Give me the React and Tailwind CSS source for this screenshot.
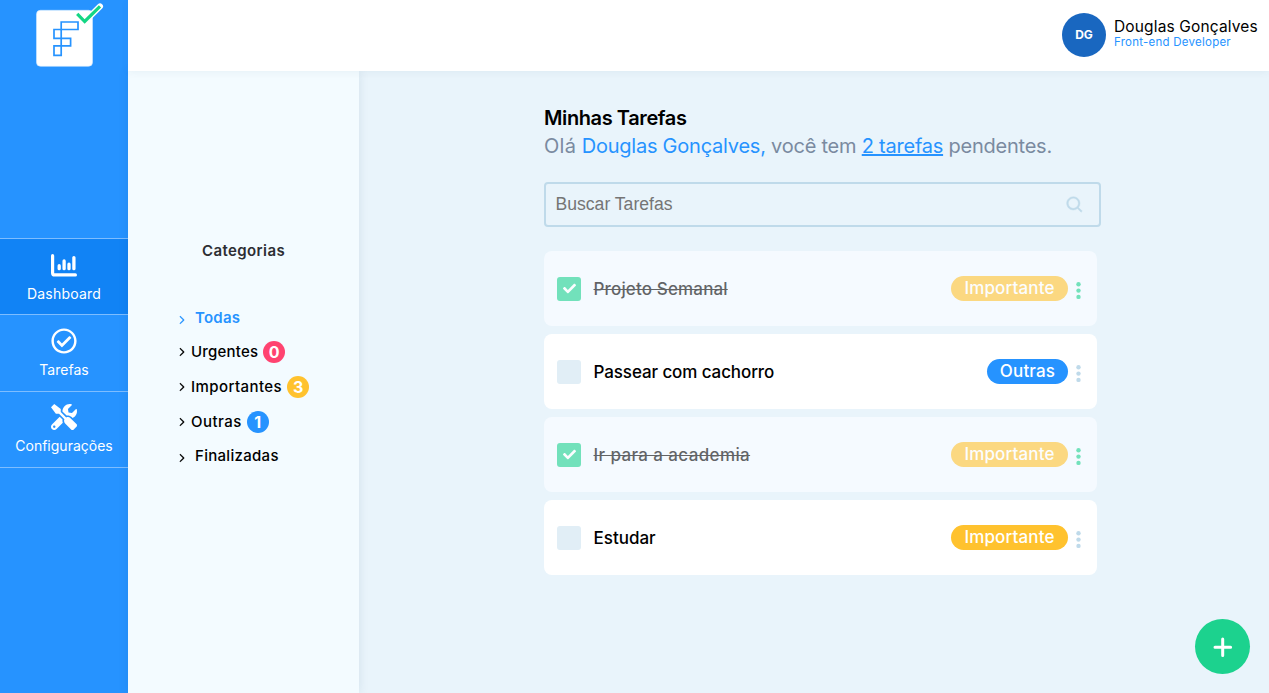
import React from "react";
import { FaRegCheckCircle, FaTools, FaCheck } from "react-icons/fa";
import { IoIosArrowForward } from "react-icons/io";
import { BiSearch } from "react-icons/bi";

function Logo() {
  return (
    <svg className="ml-2 block h-[66px] w-[72px] shrink-0" viewBox="0 0 72 66" fill="none">
      <rect x="4.5" y="9.3" width="56" height="56" rx="4" fill="#fff" stroke="#d3e9ff" strokeWidth="0.6" />
      <g stroke="#2693ff" strokeWidth="1.7">
        <path d="M29.2 21H46v7.5H29.2z" />
        <path d="M29.2 28.5H22v8.9h16.6v7.5H22v9.5h7.2V28z" />
      </g>
      <path d="M45.8 13.5l6.9 7L68 5.4" stroke="#fff" strokeWidth="6" strokeLinecap="round" />
      <path d="M45.2 12.8l7.5 7.7L68 5.4" stroke="#14d684" strokeWidth="3.2" />
    </svg>
  );
}

function ChartIcon({ className }) {
  return (
    <svg className={className} viewBox="0 0 26 26" fill="none" stroke="currentColor" strokeLinecap="round">
      <path d="M1.6 3.7v17.2q0 2 2 2h20.8" strokeWidth="3.2" />
      <path d="M8.2 13.7v3M13.1 8.9v7.8M18 12.2v4.5M22.9 5.6v11.1" strokeWidth="3.3" />
    </svg>
  );
}

const nav = [
  { label: "Dashboard", Icon: ChartIcon, active: true, tracking: "tracking-[0.22px]" },
  { label: "Tarefas", Icon: FaRegCheckCircle, tracking: "tracking-[0px]" },
  { label: "Configurações", Icon: FaTools, tracking: "tracking-[0px]" },
];

function Sidebar() {
  return (
    <aside className="flex w-32 shrink-0 flex-col bg-[#2693ff]">
      <div className="flex h-[238px] justify-center pt-px">
        <Logo />
      </div>
      <nav className="border-t border-[#7dbdff]">
        {nav.map(({ label, Icon, active, tracking }) => (
          <a
            key={label}
            className={`flex h-[76.33px] flex-col items-center border-b border-[#7dbdff] pt-[12.5px] text-white ${active ? "bg-[#1183f5]" : ""}`}
          >
            <Icon className="size-[26px]" />
            <span className={`mt-1.5 text-[14px] leading-[20px] ${tracking}`}>{label}</span>
          </a>
        ))}
      </nav>
    </aside>
  );
}

function Header() {
  return (
    <header className="z-10 flex h-[71px] shrink-0 items-start justify-end bg-white pt-[13px] pr-[11px] shadow-[0_1px_8px_rgba(0,60,100,0.06)]">
      <div className="mr-2 flex size-11 items-center justify-center rounded-full bg-[#1967c0] text-[12px] font-bold text-white">DG</div>
      <div className="w-[144px] pt-[5px] whitespace-nowrap">
        <p className="text-[15.5px] leading-[18px] tracking-[0.15px] text-black">Douglas Gonçalves</p>
        <p className="text-[11.5px] leading-[12px] tracking-[0.24px] text-[#2693ff]">Front-end Developer</p>
      </div>
    </header>
  );
}

const categories = [
  { label: "Urgentes", count: 0, color: "bg-[#ff4370]", tracking: "tracking-[0.2px]" },
  { label: "Importantes", count: 3, color: "bg-[#ffc22e]", tracking: "tracking-[0.43px]" },
  { label: "Outras", count: 1, color: "bg-[#2693ff]", tracking: "tracking-[0.45px]" },
];

const chevron = "size-[12px] -mr-px stroke-current [stroke-width:8]";

function Categories() {
  return (
    <section className="w-[231px] shrink-0 bg-[#f3fbff] pt-[169px] shadow-[0_0_10px_rgba(0,60,100,0.1)]">
      <h2 className="text-center text-[15px] leading-[22px] font-semibold tracking-[0.4px] text-[#2c2d33]">Categorias</h2>
      <ul className="mt-[43px] pl-[48px] text-[15px] font-medium text-black">
        <li className="flex h-[29px] items-start pt-[2px] leading-[22px] font-semibold tracking-[0.25px] text-[#2693ff]">
          <IoIosArrowForward className={`mt-[7px] ${chevron}`} />
          <span className="ml-2">Todas</span>
        </li>
        {categories.map((c) => (
          <li key={c.label} className="flex h-[35px] items-center">
            <IoIosArrowForward className={chevron} />
            <span className={`mt-px ml-1 ${c.tracking}`}>{c.label}</span>
            <span className={`ml-[5px] flex size-[22px] items-center justify-center rounded-full text-[16px] font-bold text-white ${c.color}`}>{c.count}</span>
          </li>
        ))}
        <li className="flex h-[34px] items-center">
          <IoIosArrowForward className={`mt-[3px] ${chevron}`} />
          <span className="ml-2 tracking-[0.3px]">Finalizadas</span>
        </li>
      </ul>
    </section>
  );
}

const tasks = [
  { title: "Projeto Semanal", tag: "Importante", done: true, tracking: "tracking-[0.15px]" },
  { title: "Passear com cachorro", tag: "Outras", done: false, tracking: "tracking-[-0.1px]" },
  { title: "Ir para a academia", tag: "Importante", done: true, tracking: "tracking-[0.38px]" },
  { title: "Estudar", tag: "Importante", done: false, tracking: "tracking-[0px]" },
];

function Task({ title, tag, done, tracking }) {
  const fade = done ? "opacity-60" : "";
  return (
    <li className={`flex h-[75px] items-center rounded-lg pl-[13px] pr-4 ${done ? "bg-[#f5faff]" : "bg-white"}`}>
      <span className={`flex size-6 items-center justify-center rounded-[3px] text-white ${fade} ${done ? "bg-[#1cd28e]" : "bg-[#e1eef6]"}`}>
        {done && <FaCheck className="size-[13px]" />}
      </span>
      <span className={`mt-[2px] ml-[12.5px] text-[17px] font-medium text-black ${fade} ${tracking} ${done ? "line-through" : ""}`}>{title}</span>
      <span
        className={`ml-auto flex h-[25px] items-center justify-center rounded-full text-[17px] font-medium tracking-[0.15px] text-white ${fade} ${tag === "Outras" ? "w-[81px] bg-[#2693ff]" : "w-[117px] bg-[#ffc22e]"}`}
      >
        {tag}
      </span>
      <svg className={`mt-[4px] ml-2 h-[18px] w-[5px] ${fade} ${done ? "fill-[#1cd28e]" : "fill-[#bfdaea]"}`} viewBox="0 0 5 18">
        <circle cx="2.5" cy="2.3" r="2.2" />
        <circle cx="2.5" cy="8.6" r="2.2" />
        <circle cx="2.5" cy="14.9" r="2.2" />
      </svg>
    </li>
  );
}

export default function App() {
  return (
    <div className="relative flex h-[693px] overflow-hidden bg-[#e9f4fb] font-['Inter',sans-serif]">
      <Sidebar />
      <div className="flex min-w-0 flex-1 flex-col">
        <Header />
        <div className="flex flex-1">
          <Categories />
          <main className="pt-[34px] pl-[185px]">
            <h1 className="text-[20px] leading-[26px] font-semibold tracking-[-0.4px] text-black">Minhas Tarefas</h1>
            <p className="mt-[2px] text-[20px] leading-[26px] tracking-[-0.23px] whitespace-nowrap text-[#7a8aa0]">
              <span className="tracking-[0.3px]">Olá</span> <span className="text-[#2693ff]">Douglas Gonçalves,</span> você tem{" "}
              <span className="text-[#2693ff] underline decoration-2">2 tarefas</span> pendentes.
            </p>
            <div className="mt-[23px] flex h-[45px] w-[557px] items-center justify-between rounded border-2 border-[#bfdaea] pr-[14px] pl-[9.5px]">
              <span className="font-['Liberation_Sans',sans-serif] text-[17.6px] text-[#757575]">Buscar Tarefas</span>
              <BiSearch className="size-5 stroke-[#bfdaea] text-[#bfdaea] [stroke-width:0.5]" />
            </div>
            <ul className="mt-6 flex w-[553px] flex-col gap-2">
              {tasks.map((t) => (
                <Task key={t.title} {...t} />
              ))}
            </ul>
          </main>
        </div>
      </div>
      <button className="absolute top-[619px] left-[1195px] flex size-[55px] items-center justify-center rounded-full bg-[#1cd28e]">
        <svg className="size-5" viewBox="0 0 20 20" stroke="#fff" strokeWidth="3" strokeLinecap="round">
          <path d="M9.7 2v16.5M2 10.2h15.6" />
        </svg>
      </button>
    </div>
  );
}
